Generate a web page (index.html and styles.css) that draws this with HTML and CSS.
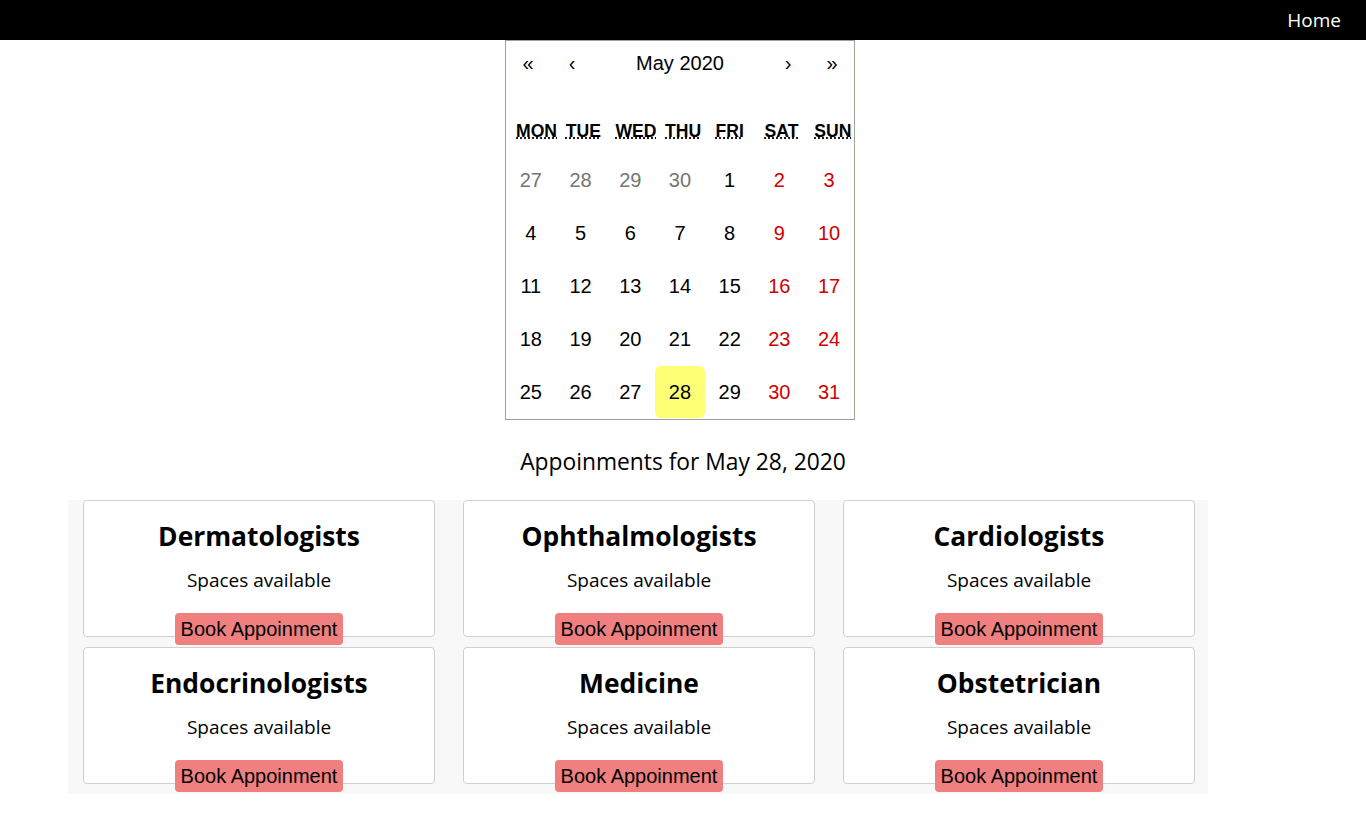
FILE: index.html
```html
<!DOCTYPE html>
<html lang="en">
<head>
<meta charset="utf-8">
<title>Appointments</title>
<link rel="stylesheet" href="styles.css">
</head>
<body>
<nav class="topbar"><a class="home" href="#">Home</a></nav>

<div class="cal-wrap">
  <div class="calendar">
    <div class="cal-nav">
      <button class="nav-btn">«</button>
      <button class="nav-btn">‹</button>
      <button class="nav-label">May 2020</button>
      <button class="nav-btn">›</button>
      <button class="nav-btn">»</button>
    </div>
    <div class="weekdays">
      <div class="wd"><abbr title="Monday">Mon</abbr></div>
      <div class="wd"><abbr title="Tuesday">Tue</abbr></div>
      <div class="wd"><abbr title="Wednesday">Wed</abbr></div>
      <div class="wd"><abbr title="Thursday">Thu</abbr></div>
      <div class="wd"><abbr title="Friday">Fri</abbr></div>
      <div class="wd"><abbr title="Saturday">Sat</abbr></div>
      <div class="wd"><abbr title="Sunday">Sun</abbr></div>
    </div>
    <div class="days">
      <button class="day other">27</button>
      <button class="day other">28</button>
      <button class="day other">29</button>
      <button class="day other">30</button>
      <button class="day">1</button>
      <button class="day weekend">2</button>
      <button class="day weekend">3</button>
      <button class="day">4</button>
      <button class="day">5</button>
      <button class="day">6</button>
      <button class="day">7</button>
      <button class="day">8</button>
      <button class="day weekend">9</button>
      <button class="day weekend">10</button>
      <button class="day">11</button>
      <button class="day">12</button>
      <button class="day">13</button>
      <button class="day">14</button>
      <button class="day">15</button>
      <button class="day weekend">16</button>
      <button class="day weekend">17</button>
      <button class="day">18</button>
      <button class="day">19</button>
      <button class="day">20</button>
      <button class="day">21</button>
      <button class="day">22</button>
      <button class="day weekend">23</button>
      <button class="day weekend">24</button>
      <button class="day">25</button>
      <button class="day">26</button>
      <button class="day">27</button>
      <button class="day today">28</button>
      <button class="day">29</button>
      <button class="day weekend">30</button>
      <button class="day weekend">31</button>
    </div>
  </div>
</div>

<p class="heading">Appoinments for May 28, 2020</p>

<div class="appointments">
  <div class="card"><h3 class="card-title">Dermatologists</h3><p class="card-text">Spaces available</p><button class="book">Book Appoinment</button></div>
  <div class="card"><h3 class="card-title">Ophthalmologists</h3><p class="card-text">Spaces available</p><button class="book">Book Appoinment</button></div>
  <div class="card"><h3 class="card-title">Cardiologists</h3><p class="card-text">Spaces available</p><button class="book">Book Appoinment</button></div>
  <div class="card"><h3 class="card-title">Endocrinologists</h3><p class="card-text">Spaces available</p><button class="book">Book Appoinment</button></div>
  <div class="card"><h3 class="card-title">Medicine</h3><p class="card-text">Spaces available</p><button class="book">Book Appoinment</button></div>
  <div class="card"><h3 class="card-title">Obstetrician</h3><p class="card-text">Spaces available</p><button class="book">Book Appoinment</button></div>
</div>
</body>
</html>
```

FILE: styles.css
```css
* { box-sizing: border-box; }

body {
  margin: 0;
  font-family: "Open Sans", "Noto Sans", sans-serif;
  color: #000;
  background: #fff;
}

.topbar {
  height: 40px;
  background: #000;
  display: flex;
  justify-content: flex-end;
  align-items: center;
  padding-right: 25px;
}

.home {
  color: #fff;
  text-decoration: none;
  font-size: 19px;
}

.cal-wrap {
  display: flex;
  justify-content: center;
  padding-right: 6px;
}

.calendar {
  width: 350px;
  border: 1px solid #a0a096;
  font-family: "Liberation Sans", Arial, sans-serif;
  background: #fff;
}

.calendar button {
  border: 0;
  background: none;
  font-family: inherit;
  color: #000;
  padding: 0;
  margin: 0;
}

.cal-nav {
  display: flex;
  height: 44px;
  margin-bottom: 16px;
}

.nav-btn {
  width: 44px;
  font-size: 20px;
}

.nav-label {
  flex: 1;
  font-size: 20px;
}

.weekdays {
  display: flex;
  height: 53px;
  padding-top: 20px;
}

.wd {
  flex: 0 0 calc(100% / 7);
  min-width: 0;
  padding: 0 10px;
  text-align: center;
  font-size: 17.6px;
  line-height: 20px;
  font-weight: bold;
  text-transform: uppercase;
  white-space: nowrap;
}

.wd abbr {
  text-decoration: underline dotted;
}

.days {
  display: flex;
  flex-wrap: wrap;
}

.day {
  flex: 0 0 calc(100% / 7);
  height: 53px;
  font-size: 20px;
}

.calendar .day.other { color: #757575; }
.calendar .day.weekend { color: #d10000; }
.calendar .day.today {
  background: #ffff76;
  border-radius: 6px;
  height: 52px;
}

.heading {
  margin: 28px 0 0;
  text-align: center;
  font-size: 22.8px;
  line-height: 28px;
  height: 52px;
}

.appointments {
  width: 1140px;
  margin-left: 68px;
  background: #f8f8f8;
  padding: 0 13px 10px 15px;
  display: grid;
  grid-template-columns: repeat(3, 352px);
  column-gap: 28px;
  row-gap: 10px;
}

.card {
  height: 137px;
  border: 1px solid #cfcfcf;
  border-radius: 4px;
  background: #fff;
  display: flex;
  flex-direction: column;
  align-items: center;
  padding-top: 19px;
}

.card-title {
  margin: 0;
  font-size: 26.4px;
  line-height: 32px;
  font-weight: bold;
}

.card-text {
  margin: 16px 0 0;
  font-size: 19px;
  line-height: 24px;
}

.book {
  margin-top: 21px;
  height: 32px;
  padding: 0 6px;
  border: 0;
  border-radius: 4px;
  background: #f08080;
  color: #000;
  font-family: "Liberation Sans", Arial, sans-serif;
  font-size: 20px;
  line-height: 32px;
  position: relative;
}
```
